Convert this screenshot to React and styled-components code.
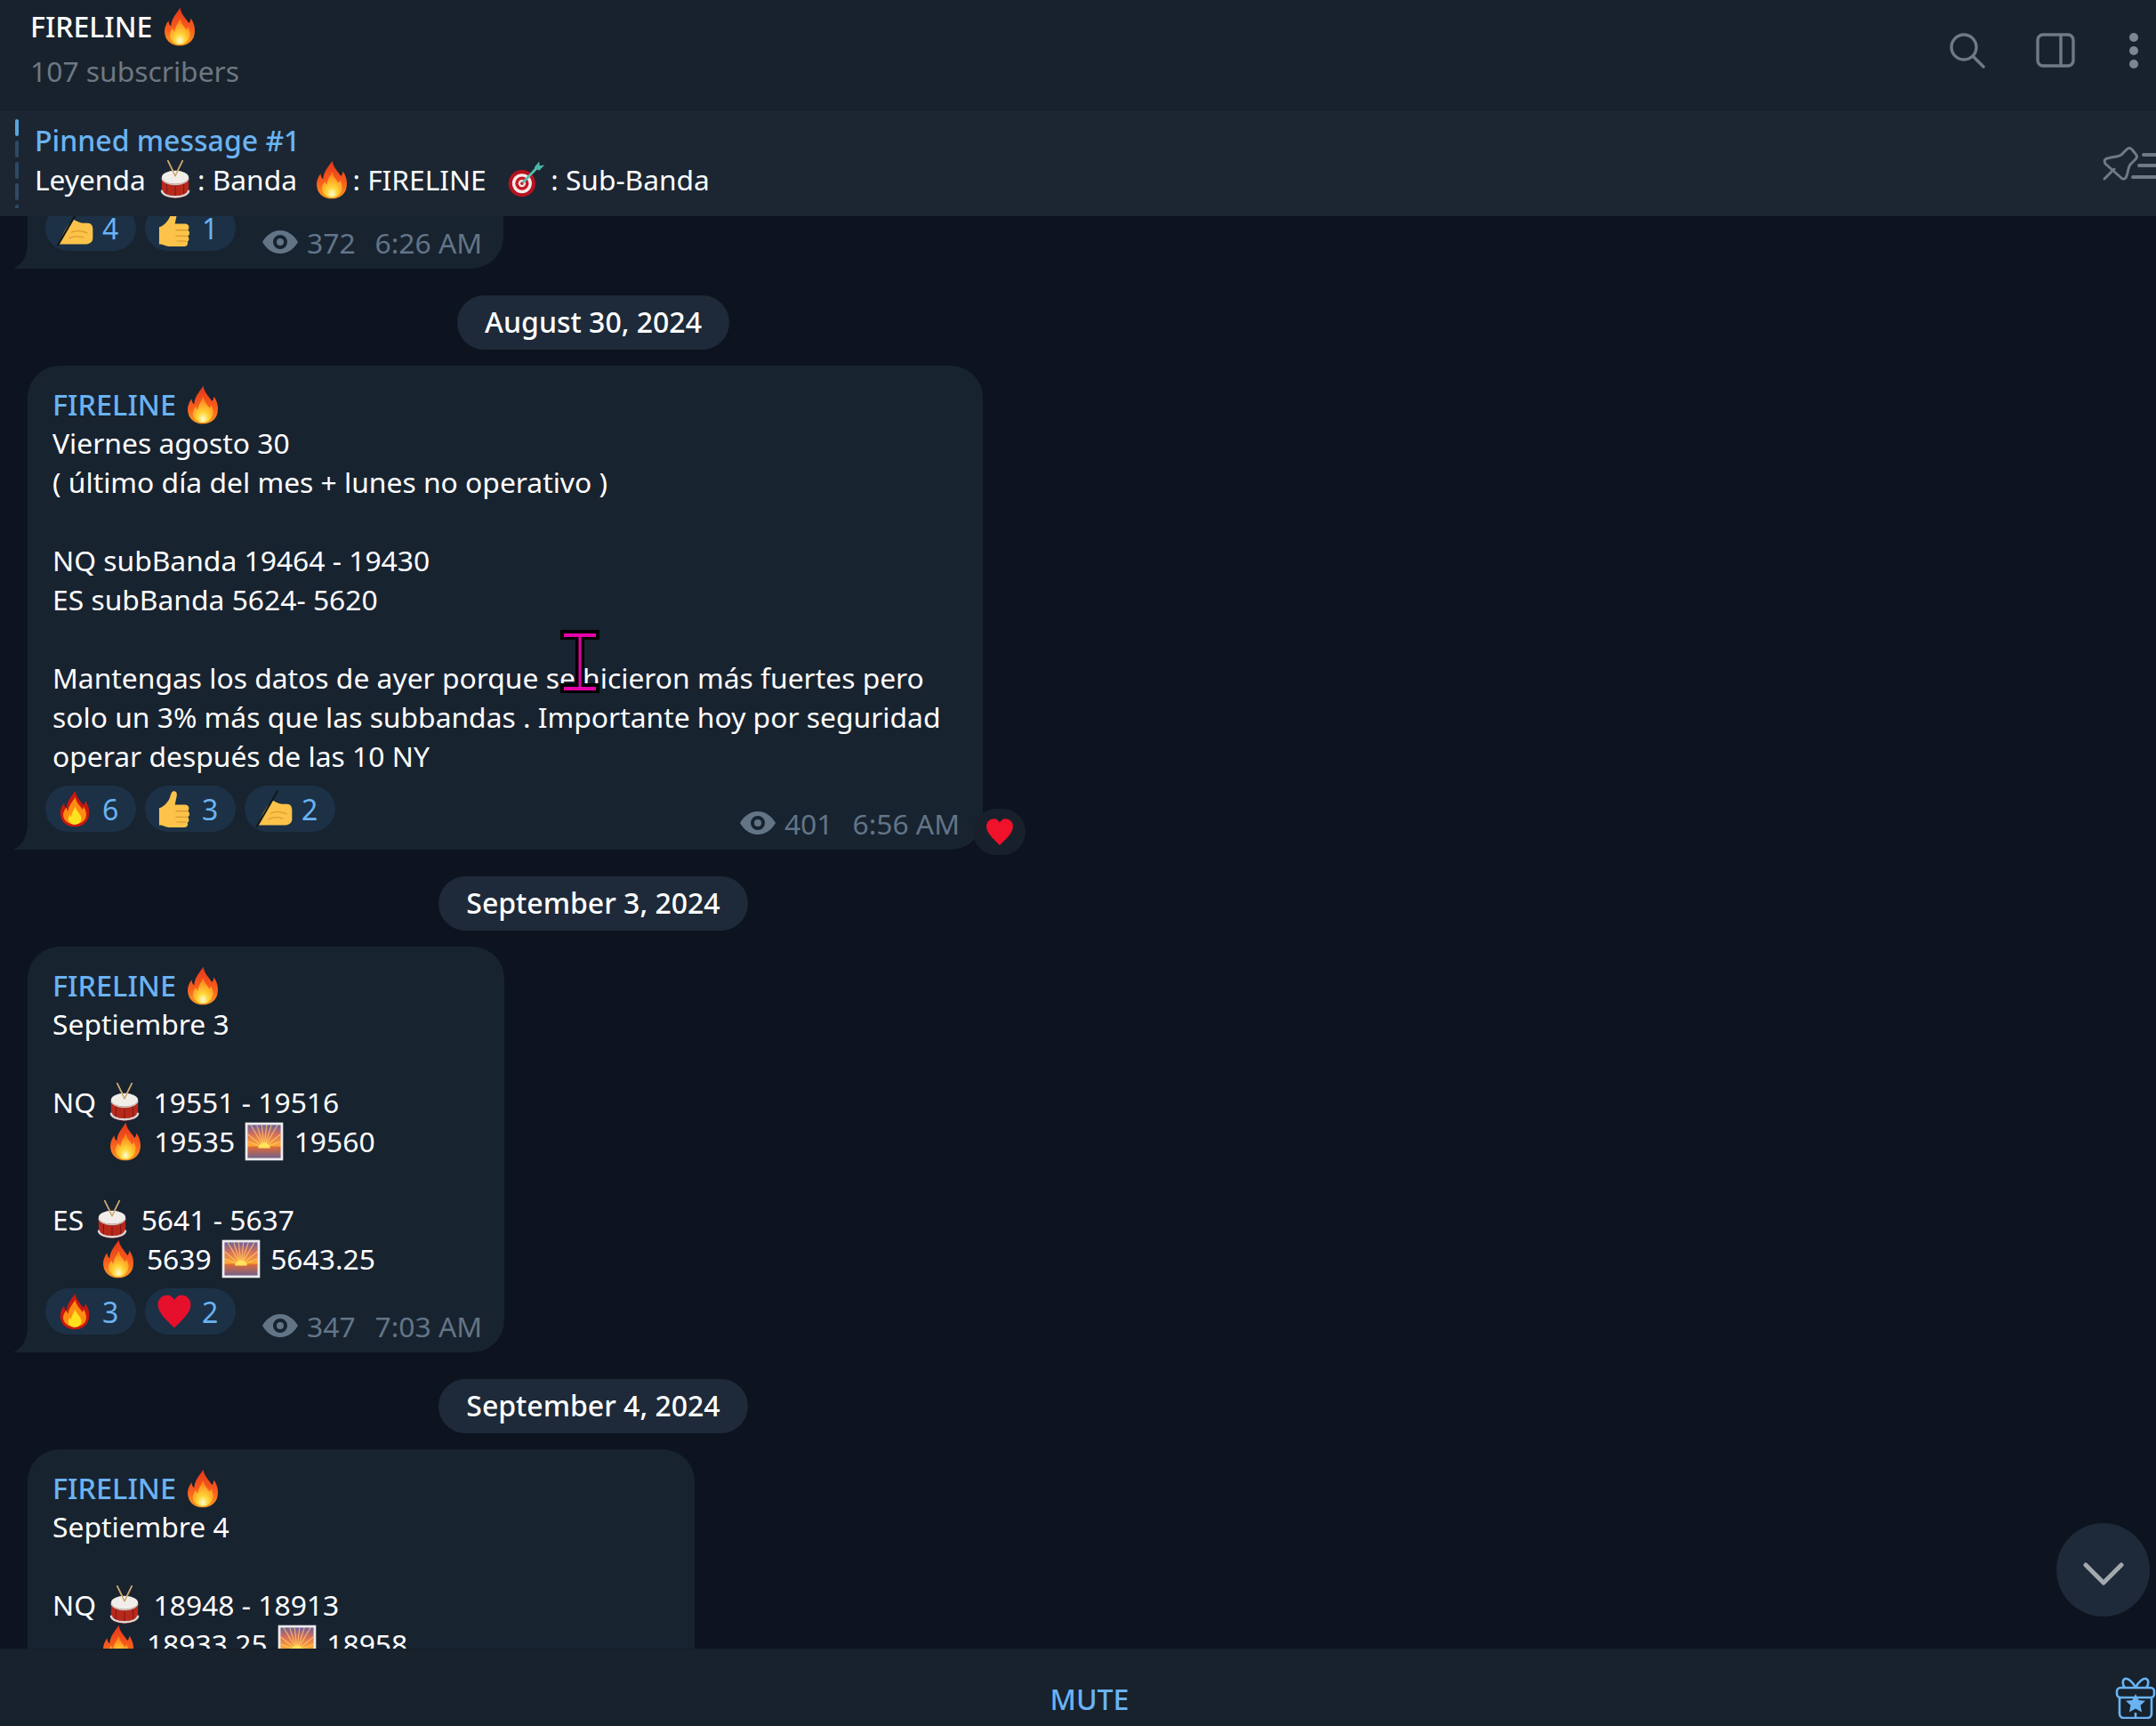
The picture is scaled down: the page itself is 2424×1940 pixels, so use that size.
import React, { useId } from "react";
import styled, { createGlobalStyle } from "styled-components";

const GlobalStyle = createGlobalStyle`
  html, body { margin: 0; padding: 0; background: #0d131f; }
  body { font-family: "Noto Sans", "Open Sans", sans-serif; color: #fff; }
`;

const Page = styled.div`
  display: flex;
  flex-direction: column;
  width: 2424px;
  height: 1940px;
  overflow: hidden;
`;

const Header = styled.header`
  display: flex;
  align-items: center;
  justify-content: space-between;
  flex: 0 0 124px;
  box-sizing: border-box;
  padding: 0 20px 0 34px;
  background: #18222c;
  border-bottom: 1px solid #151d26;
`;

const Titles = styled.div`
  display: flex;
  flex-direction: column;
  gap: 6px;
  margin-top: -14px;
`;

const Title = styled.div`
  font-size: 32px;
  font-weight: 500;
  line-height: 44px;
  height: 44px;
`;

const Subtitle = styled.div`
  font-size: 31.8px;
  line-height: 44px;
  color: #6d7883;
`;

const HeaderIcons = styled.div`
  display: flex;
  align-items: center;
  gap: 57px;
  margin-top: -10px;
`;

const DotsSlot = styled.div`
  display: flex;
  margin-left: 4px;
`;

const Pinned = styled.div`
  display: flex;
  align-items: center;
  flex: 0 0 119px;
  background: #1b2632;
`;

const PinBars = styled.div`
  display: flex;
  flex-direction: column;
  gap: 5px;
  width: 4px;
  height: 100px;
  margin: 0 18px 0 17px;
  overflow: hidden;
`;

const PinBar = styled.div`
  flex: 0 0 19px;
  border-radius: 2px;
  background: ${(p) => (p.$active ? "#5aa5e0" : "#2f4a63")};
`;

const PinnedText = styled.div`
  flex: 1;
  margin-top: -7px;
`;

const PinnedTitle = styled.div`
  font-size: 32px;
  font-weight: 500;
  line-height: 44px;
  color: #6ab3f3;
`;

const PinnedLine = styled.div`
  font-size: 31.7px;
  line-height: 44px;
  height: 44px;
  white-space: pre;
`;

const Chat = styled.main`
  position: relative;
  flex: 1;
  overflow: hidden;
  background: #0d131f;
`;

const Column = styled.div`
  display: flex;
  flex-direction: column;
  align-items: flex-start;
  box-sizing: border-box;
  width: 1334px;
  padding-left: 31px;
`;

const DateRow = styled.div`
  display: flex;
  justify-content: center;
  align-self: center;
  margin: 30px 0 18px -31px;
`;

const DatePill = styled.div`
  padding: 0 31px;
  height: 61px;
  line-height: 60px;
  border-radius: 31px;
  background: #1e2a39;
  font-size: 32px;
  font-weight: 500;
`;

const Bubble = styled.article`
  position: relative;
  box-sizing: border-box;
  width: ${(p) => p.$width}px;
  padding: 21px 26px 20px 28px;
  background: #182330;
  border-radius: 36px 36px 36px 0;
`;

const ScrolledBubble = styled(Bubble)`
  padding-top: 0;
  margin-top: -24px;
  border-radius: 0 0 36px 0;
`;

const Tail = styled.svg`
  position: absolute;
  left: -16px;
  bottom: 0;
  width: 16px;
  height: 30px;
  fill: #182330;
`;

const Sender = styled.div`
  font-size: 32.4px;
  font-weight: 500;
  line-height: 44px;
  height: 44px;
  color: #6ab3f3;
`;

const Line = styled.div`
  font-size: 31.8px;
  line-height: 44px;
  height: 44px;
  white-space: pre;
`;

const Emoji = styled.svg`
  display: inline-block;
  width: ${(p) => p.$size || 44}px;
  height: ${(p) => p.$size || 44}px;
  margin: 0 ${(p) => p.$gap || 0}px;
  vertical-align: -10px;
  flex: none;
`;

const Footing = styled.div`
  display: flex;
  align-items: flex-end;
  margin: 11px 0 0 -8px;
`;

const Reactions = styled.div`
  display: flex;
  flex: none;
  gap: 10px;
`;

const Reaction = styled.div`
  display: flex;
  align-items: center;
  gap: 10px;
  box-sizing: border-box;
  width: 102px;
  height: 52px;
  padding-left: 12px;
  border-radius: 26px;
  background: #1c3145;
  font-size: 32px;
  color: #6ab3f3;
`;

const Meta = styled.div`
  display: flex;
  flex: none;
  align-items: center;
  height: 40px;
  margin: 0 0 -10px ${(p) => (p.$wide ? "auto" : "30px")};
  font-size: 31.8px;
  white-space: nowrap;
  color: #627587;
`;

const Views = styled.span`
  margin: 0 22px 0 10px;
`;

const SideReaction = styled.div`
  position: absolute;
  right: -48px;
  bottom: -6px;
  display: flex;
  align-items: center;
  justify-content: center;
  width: 59px;
  height: 52px;
  border-radius: 26px;
  background: #18212b;
`;

const Cursor = styled.svg`
  position: absolute;
  left: 599px;
  top: 297px;
  width: 44px;
  height: 71px;
`;

const ScrollDown = styled.button`
  position: absolute;
  right: 7px;
  bottom: 36px;
  display: flex;
  align-items: center;
  justify-content: center;
  width: 105px;
  height: 105px;
  padding: 8px 0 0;
  border: 0;
  border-radius: 50%;
  background: #1e2a39;
`;

const Footer = styled.footer`
  position: relative;
  display: flex;
  align-items: center;
  justify-content: center;
  flex: 0 0 87px;
  box-sizing: border-box;
  padding: 24px 0 0 26px;
  background: #18222c;
  border-top: 1px solid #151d26;
`;

const MuteButton = styled.div`
  font-size: 32px;
  font-weight: 500;
  color: #6ab3f3;
`;

const Gift = styled.svg`
  position: absolute;
  right: 0;
  top: 31px;
  width: 46px;
  height: 47px;
`;

const Fire = ({ gap }) => {
  const id = useId();
  return (
    <Emoji $gap={gap} viewBox="0 0 64 64" aria-label="fire">
      <defs>
        <linearGradient id={id + "a"} x1="0" y1="0" x2="0" y2="1">
          <stop offset="0" stopColor="#e5341a" />
          <stop offset="0.6" stopColor="#f8611c" />
          <stop offset="1" stopColor="#ff9a1f" />
        </linearGradient>
        <radialGradient id={id + "b"} cx="0.5" cy="0.85" r="0.7">
          <stop offset="0" stopColor="#fffbd8" />
          <stop offset="0.35" stopColor="#ffd83a" />
          <stop offset="1" stopColor="#ff8a1c" />
        </radialGradient>
      </defs>
      <path
        fill={`url(#${id}a)`}
        d="M33 1c1 11 9 17 14 25 2-2 3-5 3-8 6 8 8 18 6 27-2 11-12 18-24 18S10 56 8 45c-2-9 1-17 6-23 0 4 1 7 4 9 0-11 8-20 15-30z"
      />
      <path
        fill={`url(#${id}b)`}
        d="M33 19c1 8 6 12 10 18 1-1 2-3 2-5 4 6 5 12 3 17-2 7-9 12-16 12s-14-5-16-12c-1-6 1-11 5-15 0 3 1 4 3 6 0-7 5-13 9-21z"
      />
    </Emoji>
  );
};

const SmallFire = () => (
  <Emoji $size={42} viewBox="0 0 64 64" aria-label="fire">
    <path fill="#c9180e" d="M33 1c1 11 9 17 14 25 2-2 3-5 3-8 6 8 8 18 6 27-2 11-12 18-24 18S10 56 8 45c-2-9 1-17 6-23 0 4 1 7 4 9 0-11 8-20 15-30z" />
    <path fill="#ff8c12" d="M33 12c1 9 8 14 12 21 1-1 2-3 2-5 4 6 6 13 4 19-2 7-11 12-19 12s-17-5-19-12c-2-7 1-13 5-17 0 3 1 4 3 6 0-9 7-16 12-24z" />
    <path fill="#ffe21f" d="M33 28c1 6 5 9 8 14 3 5 3 9 1 12-2 3-6 5-10 5s-8-2-10-5c-2-4-1-9 2-12 0 2 1 3 2 4 0-6 4-11 7-18z" />
  </Emoji>
);

const Drum = ({ gap = 2 }) => (
  <Emoji $gap={gap} viewBox="0 0 64 64" aria-label="drum">
    <path d="M20 1l11 22M44 1L33 23" stroke="#d9b377" strokeWidth="2.4" strokeLinecap="round" />
    <path fill="#b8291c" d="M10 28v22c0 8 10 12 22 12s22-4 22-12V28z" />
    <path fill="none" stroke="#7e1a12" strokeWidth="1.6" d="M18 38v20M32 40v22M46 38v20" />
    <path fill="none" stroke="#d8d8d8" strokeWidth="3.4" d="M10 49c0 7 10 11 22 11s22-4 22-11" />
    <ellipse cx="32" cy="28" rx="22" ry="11" fill="#f1eeea" />
    <path fill="none" stroke="#c9c5c2" strokeWidth="2.2" d="M10 30c2 6 11 10 22 10s20-4 22-10" />
    <path d="M22 5l10 21M42 5L32 26" stroke="#c8a268" strokeWidth="2" strokeLinecap="round" />
  </Emoji>
);

const Target = ({ gap }) => (
  <Emoji $gap={gap} viewBox="0 0 64 64" aria-label="target">
    <circle cx="26" cy="38" r="22" fill="#b5131f" />
    <circle cx="26" cy="38" r="16" fill="#f4ecea" />
    <circle cx="26" cy="38" r="11" fill="#c91a26" />
    <circle cx="26" cy="38" r="6" fill="#f4ecea" />
    <circle cx="26" cy="38" r="2.6" fill="#c91a26" />
    <path d="M27 37L52 11" stroke="#59bdb0" strokeWidth="4" />
    <path fill="#4db3a7" d="M46 12l8-10 1 7 8-1-9 9z" />
  </Emoji>
);

const Sunrise = () => {
  const id = useId();
  return (
    <Emoji $gap={3} viewBox="0 0 64 64" aria-label="sunrise">
      <defs>
        <linearGradient id={id} x1="0" y1="0" x2="0" y2="1">
          <stop offset="0" stopColor="#6f5f9e" />
          <stop offset="0.3" stopColor="#d9705a" />
          <stop offset="0.62" stopColor="#ffa832" />
          <stop offset="0.68" stopColor="#d96a3a" />
          <stop offset="1" stopColor="#75608a" />
        </linearGradient>
      </defs>
      <rect x="1" y="1" width="62" height="62" fill="#ececec" />
      <rect x="5" y="5" width="54" height="54" fill={`url(#${id})`} />
      <path
        stroke="#ffd36a"
        strokeOpacity="0.7"
        strokeWidth="1.8"
        d="M32 42L5 32M32 42L5 20M32 42L10 5M32 42L20 5M32 42L28 5M32 42L36 5M32 42L44 5M32 42L54 5M32 42L59 20M32 42L59 32"
      />
      <path fill="#ffe45a" d="M22 43a10 9 0 0 1 20 0z" />
    </Emoji>
  );
};

const Thumb = () => (
  <Emoji $size={42} viewBox="0 0 64 64" aria-label="thumbs up">
    <path
      fill="#fbc34a"
      d="M31 2c5 0 6 4 5 9l-3 14h17c5 0 7 3 7 6s-1 4-2 5c2 1 3 3 3 5s-1 4-3 5c1 1 2 3 2 5s-1 4-3 5c1 1 1 2 1 3 0 3-3 5-6 5H24c-5 0-9-2-12-3-2-1-4-1-6-1V31c7-2 13-8 17-15 3-5 3-14 8-14z"
    />
    <path fill="none" stroke="#d9942a" strokeWidth="1.6" d="M34 36h22M34 46h21M36 55h16" />
  </Emoji>
);

const WritingHand = () => (
  <Emoji $size={42} viewBox="0 0 64 64" aria-label="writing hand">
    <path
      fill="#fbc34a"
      d="M30 18c5 2 10 6 16 6h8c6 0 9 4 9 10v16c0 6-5 10-11 10H10c-2 0-4 0-6 1C10 48 16 30 30 18z"
    />
    <path fill="none" stroke="#d9942a" strokeWidth="1.6" d="M26 40c8-4 18-3 28 1M22 50c9-4 18-4 26-1" />
    <path stroke="#14171c" strokeWidth="3.4" strokeLinecap="round" d="M38 2L3 62" />
  </Emoji>
);

const Heart = ({ size = 42, color = "#e6102c" }) => (
  <Emoji $size={size} viewBox="0 0 64 64" aria-label="heart">
    <path
      fill={color}
      d="M32 60C21 49 5 36 4 22 3 11 11 4 20 4c5 0 9 3 12 8 3-5 7-8 12-8 9 0 17 7 16 18-1 14-17 27-28 38z"
    />
  </Emoji>
);

const Eye = () => (
  <svg width="40" height="28" viewBox="0 0 40 28" aria-hidden="true">
    <path
      fill="#627587"
      fillRule="evenodd"
      d="M20 1c9 0 16 6 20 13-4 7-11 13-20 13S4 21 0 14C4 7 11 1 20 1zm0 5a8 8 0 1 0 0 16 8 8 0 0 0 0-16zm0 4a4 4 0 1 1 0 8 4 4 0 0 1 0-8z"
    />
  </svg>
);

const SearchIcon = () => (
  <svg width="40" height="40" viewBox="0 0 40 40" fill="none" stroke="#6f7a85" strokeWidth="3.4" strokeLinecap="round" aria-hidden="true">
    <circle cx="16" cy="16" r="14" />
    <path d="M27 27l11 11" />
  </svg>
);

const PanelIcon = () => (
  <svg width="44" height="39" viewBox="0 0 44 39" fill="none" stroke="#6f7a85" strokeWidth="3.4" aria-hidden="true">
    <rect x="2" y="2" width="40" height="35" rx="6" />
    <path d="M28 2v35" />
  </svg>
);

const DotsIcon = () => (
  <svg width="10" height="40" viewBox="0 0 10 40" fill="#7d8792" aria-hidden="true">
    <circle cx="5" cy="5" r="5" />
    <circle cx="5" cy="20" r="5" />
    <circle cx="5" cy="35" r="5" />
  </svg>
);

const PinListIcon = () => (
  <svg width="60" height="38" viewBox="0 0 60 38" fill="none" stroke="#6f7a85" strokeWidth="3" strokeLinecap="round" strokeLinejoin="round" aria-hidden="true">
    <path d="M2 36l11-11" />
    <path d="M3 14c6-3 14-2 18-5l6-6c2-2 4-2 6 0l4 5c2 2 2 4 0 6l-6 6c-3 4-2 10-5 15-1 1-3 2-5 0L3 19c-1-2-1-4 0-5z" />
    <path d="M46 9h14M41 21h19M34 34h26" strokeWidth="4" />
  </svg>
);

const Chevron = () => (
  <svg width="46" height="26" viewBox="0 0 46 26" fill="none" stroke="#a3a9af" strokeWidth="5" strokeLinecap="round" strokeLinejoin="round" aria-hidden="true">
    <path d="M3 3l20 20L43 3" />
  </svg>
);

const GiftIcon = () => (
  <Gift viewBox="0 0 46 47" fill="none" stroke="#6ab3f3" strokeWidth="2.6" strokeLinejoin="round" aria-hidden="true">
    <rect x="2" y="12" width="42" height="11" rx="4" />
    <path d="M5 23v18c0 3 2 5 5 5h26c3 0 5-2 5-5V23" />
    <path d="M23 12C20 5 14 1 11 2c-3 1-3 7 0 10M23 12c3-7 9-11 12-10 3 1 3 7 0 10" />
    <path d="M23 40v6" />
    <path fill="#6ab3f3" stroke="none" d="M23 19l3.6 7 7.4.8-5.5 5 1.6 7.6-7.1-3.9-7.1 3.9 1.6-7.6-5.5-5 7.4-.8z" />
  </Gift>
);

const TailShape = () => (
  <Tail viewBox="0 0 16 30" aria-hidden="true">
    <path d="M16 0v30H0c6-3 16-10 16-30z" />
  </Tail>
);

const Author = () => (
  <Sender>
    FIRELINE <Fire />
  </Sender>
);

const Meter = ({ views, time, wide }) => (
  <Meta $wide={wide}>
    <Eye />
    <Views>{views}</Views>
    <span>{time}</span>
  </Meta>
);

const App = () => (
  <Page>
    <GlobalStyle />
    <Header>
      <Titles>
        <Title>
          FIRELINE <Fire />
        </Title>
        <Subtitle>107 subscribers</Subtitle>
      </Titles>
      <HeaderIcons>
        <SearchIcon />
        <PanelIcon />
        <DotsSlot><DotsIcon /></DotsSlot>
      </HeaderIcons>
    </Header>

    <Pinned>
      <PinBars>
        <PinBar $active />
        <PinBar />
        <PinBar />
        <PinBar />
        <PinBar />
      </PinBars>
      <PinnedText>
        <PinnedTitle>Pinned message #1</PinnedTitle>
        <PinnedLine>
          Leyenda <Drum gap={3} />: Banda  <Fire gap={1} />: FIRELINE  <Target gap={6} />: Sub-Banda
        </PinnedLine>
      </PinnedText>
      <PinListIcon />
    </Pinned>

    <Chat>
      <Column>
        <ScrolledBubble $width={535}>
          <TailShape />
          <Footing>
            <Reactions>
              <Reaction><WritingHand />4</Reaction>
              <Reaction><Thumb />1</Reaction>
            </Reactions>
            <Meter views="372" time="6:26 AM" />
          </Footing>
        </ScrolledBubble>

        <DateRow><DatePill>August 30, 2024</DatePill></DateRow>

        <Bubble $width={1074}>
          <TailShape />
          <Author />
          <Line>Viernes agosto 30</Line>
          <Line>( último día del mes + lunes no operativo )</Line>
          <Line />
          <Line>NQ subBanda 19464 - 19430</Line>
          <Line>ES subBanda 5624- 5620</Line>
          <Line />
          <Line>Mantengas los datos de ayer porque se hicieron más fuertes pero</Line>
          <Line>solo un 3% más que las subbandas . Importante hoy por seguridad</Line>
          <Line>operar después de las 10 NY</Line>
          <Footing>
            <Reactions>
              <Reaction><SmallFire />6</Reaction>
              <Reaction><Thumb />3</Reaction>
              <Reaction><WritingHand />2</Reaction>
            </Reactions>
            <Meter views="401" time="6:56 AM" wide />
          </Footing>
          <SideReaction><Heart size={34} color="#f0112b" /></SideReaction>
          <Cursor viewBox="0 0 44 71" aria-hidden="true">
            <path fill="#000" d="M0 0h44v11H27v49h17v11H0V60h17V11H0z" />
            <path fill="#e600a8" d="M4 4h36v4H4zM4 64h36v4H4zM20.500 6h3v60h-3z" />
          </Cursor>
        </Bubble>

        <DateRow><DatePill>September 3, 2024</DatePill></DateRow>

        <Bubble $width={536}>
          <TailShape />
          <Author />
          <Line>Septiembre 3</Line>
          <Line />
          <Line>NQ <Drum /> 19551 - 19516</Line>
          <Line>       <Fire gap={2} /> 19535 <Sunrise /> 19560</Line>
          <Line />
          <Line>ES <Drum /> 5641 - 5637</Line>
          <Line>      <Fire gap={2} /> 5639 <Sunrise /> 5643.25</Line>
          <Footing>
            <Reactions>
              <Reaction><SmallFire />3</Reaction>
              <Reaction><Heart />2</Reaction>
            </Reactions>
            <Meter views="347" time="7:03 AM" />
          </Footing>
        </Bubble>

        <DateRow><DatePill>September 4, 2024</DatePill></DateRow>

        <Bubble $width={750}>
          <Author />
          <Line>Septiembre 4</Line>
          <Line />
          <Line>NQ <Drum /> 18948 - 18913</Line>
          <Line>      <Fire gap={2} /> 18933.25 <Sunrise /> 18958</Line>
        </Bubble>
      </Column>
      <ScrollDown aria-label="Scroll down"><Chevron /></ScrollDown>
    </Chat>

    <Footer>
      <MuteButton>MUTE</MuteButton>
      <GiftIcon />
    </Footer>
  </Page>
);

export default App;
